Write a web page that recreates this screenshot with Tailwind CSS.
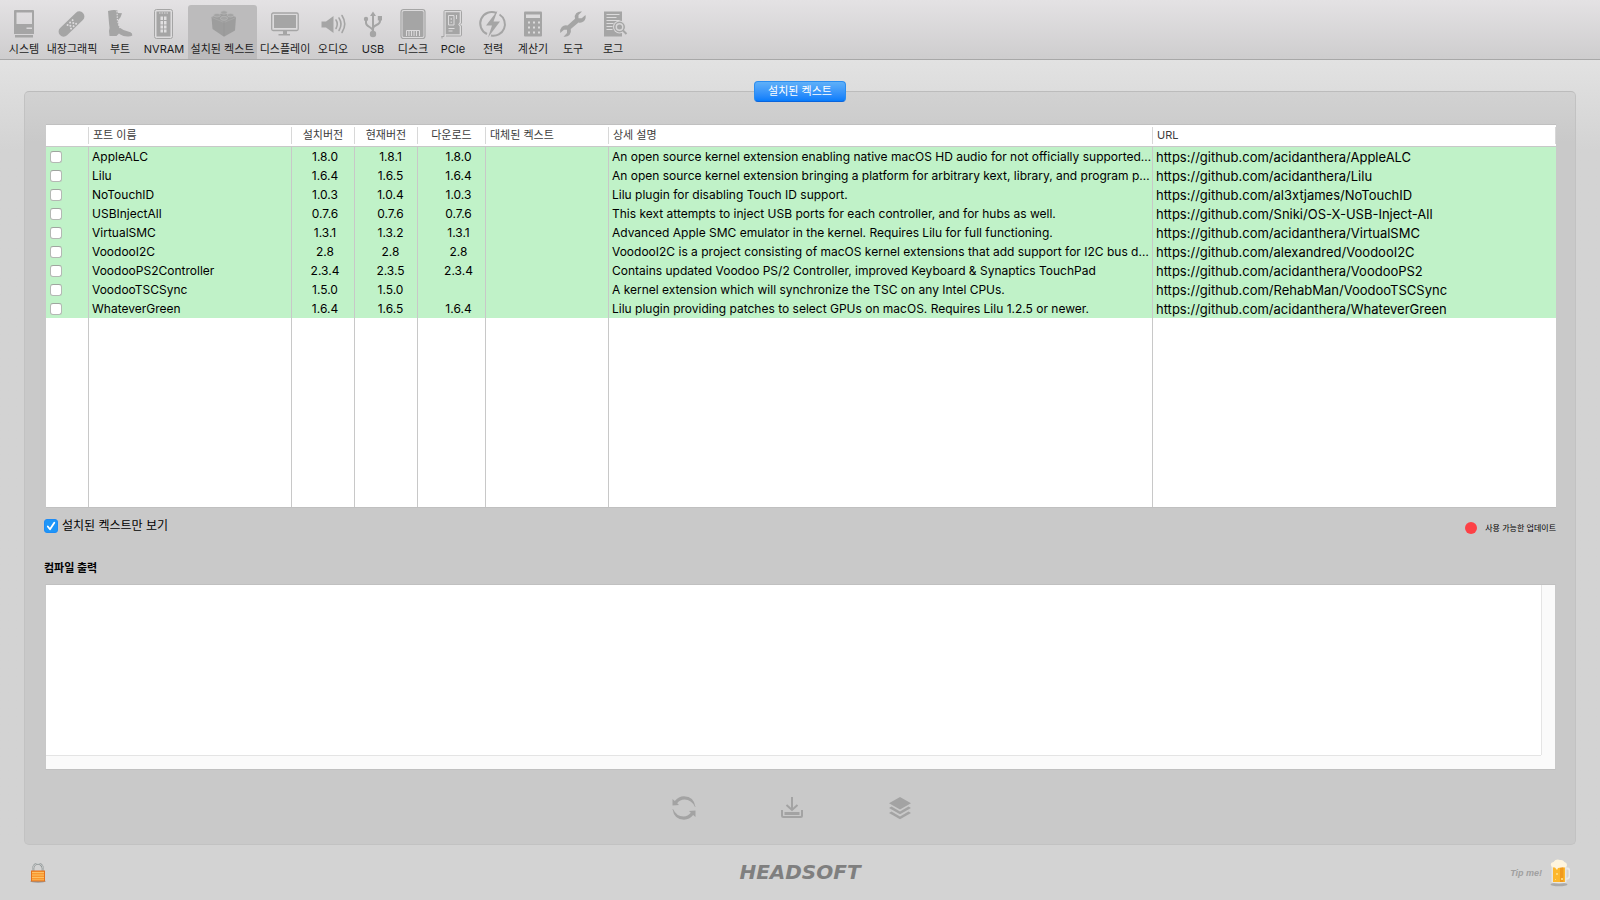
<!DOCTYPE html>
<html lang="ko">
<head>
<meta charset="utf-8">
<meta name="viewport" content="width=device-width, initial-scale=1">
<title>설치된 켁스트</title>
<script src="https://cdn.jsdelivr.net/npm/@tailwindcss/browser@4"></script>
</head>
<body class="flex min-h-screen flex-col bg-[#d3d3d3] font-[Inter,'Noto_Sans_CJK_KR',sans-serif] text-xs text-black">

<header class="flex h-[60px] shrink-0 items-end border-b border-[#a8a8a8] bg-linear-to-b from-[#e4e2e4] to-[#cecdce] pl-1 text-[11px] leading-[18px] whitespace-nowrap text-[#1c1c1c] [&_button]:flex [&_button]:h-[54px] [&_button]:shrink-0 [&_button]:flex-col [&_button]:items-center [&_button]:pt-[3px] [&_svg]:size-8 [&_svg]:shrink-0 [&_svg]:text-[#a5a5a5]">
  <button type="button" class="w-10"><svg viewBox="0 0 32 32" fill="currentColor"><path fill-rule="evenodd" d="M7 2h18q1 0 1 1v23H6V3q0-1 1-1zM8.500 4.500V16h15.500V4.500zM18.500 19.500v1.500h5.500v-1.500z"/><path d="M7 27h18v2.500H7z"/></svg>시스템</button>
  <button type="button" class="w-14"><svg viewBox="0 0 32 32"><g transform="rotate(-44 15.500 16)"><rect x="-.5" y="11" width="32" height="10" rx="5" fill="currentColor"/><g fill="#dddbdd"><circle cx="12" cy="14" r="1"/><circle cx="15.500" cy="14" r="1"/><circle cx="19" cy="14" r="1"/><circle cx="13.500" cy="16.500" r="1"/><circle cx="17.500" cy="16.500" r="1"/><circle cx="12" cy="19" r="1"/><circle cx="15.500" cy="19" r="1"/><circle cx="19" cy="19" r="1"/></g></g></svg>내장그래픽</button>
  <button type="button" class="w-10"><svg viewBox="0 0 32 32" fill="currentColor"><path d="M4 3q6-1.500 9.500-.5L14 5l4 .2-1.500 4-2.500 3 .5 5q1 3 5 4.800l7 2.300q2 1 1.800 3.200-1.500 1-4 1-5 .2-8-2L15 25.500 12.500 28H5.500L5 23q1-3 0-8z"/><path d="M13 3l.5 10 2.500 7" fill="none" stroke="#dddbdd" stroke-width="1.200" stroke-dasharray="1.500 1.200"/></svg>부트</button>
  <button type="button" class="w-12"><svg viewBox="0 0 32 32"><rect x="6.500" y="1.500" width="18" height="29" rx="2" fill="#dddcdd" stroke="currentColor"/><path d="M8.500 3.500h14v25h-14z" fill="currentColor"/><path d="M11 5h9" stroke="#dddcdd" stroke-dasharray="1.500 1"/><path d="M12 8h7v17h-7zM15.500 8v17M12 12.500h7M12 17h7M12 21h7" fill="#e0dfe0" stroke="#a5a5a5"/></svg>NVRAM</button>
  <button type="button" aria-current="page" class="w-[69px] rounded-t-[3px] bg-[#bcbbbc]"><svg viewBox="0 0 32 32"><path d="M4.500 9 16 5l13 4-1 13.500-11 6.200L5.500 21z" fill="#9d9d9d"/><path d="M5 9.500l12 5 12-5" fill="none" stroke="#a8a8a8"/><path d="M17 14v14" stroke="#979797"/><g fill="#a4a4a4" stroke="#b9b9b9" stroke-width=".7"><ellipse cx="17" cy="4.500" rx="3.200" ry="1.700"/><ellipse cx="10" cy="7.200" rx="3.300" ry="1.800"/><ellipse cx="23.500" cy="7.200" rx="3.300" ry="1.800"/><ellipse cx="17" cy="10.300" rx="3.600" ry="2"/></g></svg>설치된 켁스트</button>
  <button type="button" class="w-14"><svg viewBox="0 0 32 32"><rect x="2.700" y="5" width="26.500" height="17.500" rx="1.500" fill="#dcdbdc" stroke="currentColor" stroke-width="1.300"/><path d="M5 7h22v13H5zM14 23h4v3h3v1.500H9.500V26H14z" fill="currentColor"/></svg>디스플레이</button>
  <button type="button" class="w-10"><svg viewBox="0 0 32 32"><path d="M4.500 13.500H9l7.500-5.500v17L9 19.500H4.500z" fill="currentColor"/><path d="M19 12q2.500 4 0 8.500M22 10q4 6 0 12.500M25 7.500q5.500 8.500 0 17" fill="none" stroke="currentColor" stroke-width="1.600" stroke-linecap="round"/></svg>오디오</button>
  <button type="button" class="w-10"><svg viewBox="0 0 32 32"><path d="M16 6v20M16 23q0-2-3.500-4Q9 17 9 15v-3.500M16 20.500q0-2 3.500-3.500 3.500-1.500 3.500-4V10" fill="none" stroke="currentColor" stroke-width="2"/><path d="M16 3.500 19 8h-6zM20.800 8H25v4.500h-4.200z" fill="currentColor"/><circle cx="9" cy="11" r="2.200" fill="currentColor"/><circle cx="16" cy="26" r="3.200" fill="currentColor"/></svg>USB</button>
  <button type="button" class="w-10"><svg viewBox="0 0 32 32"><rect x="4" y="1.500" width="24" height="29" rx="2.500" fill="#dcdbdc" stroke="currentColor" stroke-width="1.200"/><rect x="5.500" y="3" width="21" height="26" rx="1.500" fill="currentColor"/><path d="M9.500 28v-5.500h13V28M12 23v5M14.500 23v5M17 23v5M19.500 23v5" fill="none" stroke="#dcdbdc"/></svg>디스크</button>
  <button type="button" class="w-10"><svg viewBox="0 0 32 32"><path d="M4.500 28.500H7V3.500q0-1 1-1h15.500q1 0 1 1V15l-1.500 1.500 1.500 1.500v9q0 1-1 1H9" fill="#dcdbdc" stroke="currentColor" stroke-width="1"/><path d="M5 28v2.500" stroke="currentColor"/><path d="M8.700 4.300h14v10l-1.500 2.200 1.500 2V26.300h-14z" fill="currentColor"/><path d="M11.500 7.500h5.500V17h-5.500zM19.500 7v4M11.500 20.500h6M11.500 23h4" fill="none" stroke="#dcdbdc"/><path d="M14.200 10v2M14.200 13.500v1.500" stroke="#dcdbdc"/></svg>PCIe</button>
  <button type="button" class="w-10"><svg viewBox="0 0 32 32"><path d="M19.500 5A11.500 11.500 0 1 0 10 26M14 27.500A11.500 11.500 0 0 0 22.500 6.500" fill="none" stroke="currentColor" stroke-width="2"/><path d="M20.500 2.500 9 17.500h6l-4 12 12-16h-6.500z" fill="currentColor"/></svg>전력</button>
  <button type="button" class="w-10"><svg viewBox="0 0 32 32"><rect x="7" y="3.500" width="18" height="25" rx="1" fill="currentColor"/><path d="M9 6.500h14V10H9z" fill="#dcdbdc"/><path d="M11 14.500h12M11 19.500h12M11 24.500h12" stroke="#dcdbdc" stroke-width="1.800" stroke-dasharray="2 3"/></svg>계산기</button>
  <button type="button" class="w-10"><svg viewBox="0 0 32 32"><path d="M25 3.500 21.500 7v3.200h3.200L28.500 7q.8 4-1.700 6.200-2.300 2-5.300 1.200L13.800 21q.8 3.500-1.300 6-2.200 2.300-6 1.700L10 25v-3.200H7L3.300 25q-.7-3.800 1.500-6 2.400-2.300 5.700-1.400L18 10.700q-1-3 1.200-5.400Q21.500 3 25 3.500z" fill="currentColor"/></svg>도구</button>
  <button type="button" class="w-10"><svg viewBox="0 0 32 32"><path d="M7 3.500h18V28.500H7z" fill="currentColor"/><path d="M9.500 6.500h13M9.500 9.500h10M9.500 12.500h13M9.500 15.500h7M9.500 18.500h6M9.500 21.500h6" stroke="#dcdbdc"/><circle cx="22.500" cy="19" r="6.500" fill="#d8d7d8"/><circle cx="22.500" cy="19" r="4.700" fill="#d8d7d8" stroke="currentColor" stroke-width="1.500"/><circle cx="22.500" cy="19" r="2.500" fill="currentColor"/><path d="M26 22.500l3.500 3.500" stroke="currentColor" stroke-width="2"/></svg>로그</button>
</header>

<div class="flex flex-1 flex-col bg-linear-to-b from-[#e2e2e2] to-[#d3d3d3] to-[90px] px-6 pt-[31px]">
  <main class="relative flex flex-1 flex-col rounded-[5px] border border-[#c2c2c2] border-t-[#bcbcbc] bg-linear-to-b from-[#d2d2d2] to-[#c9c9c9] to-[50px] px-[19px] pt-8">
    <button type="button" class="absolute -top-[11px] left-1/2 h-[21px] w-[92px] -translate-x-1/2 rounded-[4px] border border-[#2a8df0] border-b-[#0a64dc] bg-linear-to-b from-[#5fb0f8] to-[#057cfb] pb-0.5 text-[11px] leading-4 text-white">설치된 켁스트</button>

    <div class="ml-0.5 grid flex-1 border-y border-[#c0c0c0] bg-white">
      <table class="w-full table-fixed border-separate border-spacing-0 text-left [&_a]:block [&_a]:pt-px [&_a]:text-[13px] [&_a]:leading-[18px] [&_td]:whitespace-nowrap [&_td]:border-r [&_td]:border-[#c8c8c8] [&_td]:py-0 [&_td]:pl-[3px] [&_td:last-child]:border-r-0 [&_td:nth-child(3)]:pl-[4px] [&_td:nth-child(3)]:text-center [&_td:nth-child(4)]:pl-[9px] [&_td:nth-child(4)]:text-center [&_td:nth-child(5)]:pl-[14px] [&_td:nth-child(5)]:text-center [&_th]:border-b [&_th]:border-[#c8c8c8] [&_th]:p-0 [&_th]:text-[11px] [&_th]:font-normal [&_th]:text-[#3c3c3c] [&_th>span]:block [&_th>span]:h-[17px] [&_th>span]:border-r [&_th>span]:border-[#d8d8d8] [&_th>span]:px-1 [&_th>span]:leading-[17px] [&_input]:block [&_input]:size-3 [&_input]:appearance-none [&_input]:rounded-[3px] [&_input]:border [&_input]:border-[#b4b8b4] [&_input]:border-t-[#9fa59f] [&_input]:bg-white [&_input]:ml-px">
        <colgroup><col class="w-[43px]"><col class="w-[203px]"><col class="w-[63px]"><col class="w-[63px]"><col class="w-[68px]"><col class="w-[123px]"><col><col class="w-[403px]"></colgroup>
        <thead>
          <tr class="h-[22px]"><th scope="col"><span></span></th><th scope="col"><span>포트 이름</span></th><th scope="col" class="text-center"><span>설치버전</span></th><th scope="col" class="text-center"><span>현재버전</span></th><th scope="col" class="text-center"><span>다운로드</span></th><th scope="col"><span>대체된 켁스트</span></th><th scope="col"><span>상세 설명</span></th><th scope="col"><span>URL</span></th></tr>
        </thead>
        <tbody class="[&_tr]:h-[19px] [&_tr]:bg-[#c0f2c8]">
          <tr><td><input type="checkbox" aria-label="AppleALC"></td><td>AppleALC</td><td>1.8.0</td><td>1.8.1</td><td>1.8.0</td><td></td><td>An open source kernel extension enabling native macOS HD audio for not officially supported…</td><td><a href="https://github.com/acidanthera/AppleALC">https://github.com/acidanthera/AppleALC</a></td></tr>
          <tr><td><input type="checkbox" aria-label="Lilu"></td><td>Lilu</td><td>1.6.4</td><td>1.6.5</td><td>1.6.4</td><td></td><td>An open source kernel extension bringing a platform for arbitrary kext, library, and program p…</td><td><a href="https://github.com/acidanthera/Lilu">https://github.com/acidanthera/Lilu</a></td></tr>
          <tr><td><input type="checkbox" aria-label="NoTouchID"></td><td>NoTouchID</td><td>1.0.3</td><td>1.0.4</td><td>1.0.3</td><td></td><td>Lilu plugin for disabling Touch ID support.</td><td><a href="https://github.com/al3xtjames/NoTouchID">https://github.com/al3xtjames/NoTouchID</a></td></tr>
          <tr><td><input type="checkbox" aria-label="USBInjectAll"></td><td>USBInjectAll</td><td>0.7.6</td><td>0.7.6</td><td>0.7.6</td><td></td><td>This kext attempts to inject USB ports for each controller, and for hubs as well.</td><td><a href="https://github.com/Sniki/OS-X-USB-Inject-All">https://github.com/Sniki/OS-X-USB-Inject-All</a></td></tr>
          <tr><td><input type="checkbox" aria-label="VirtualSMC"></td><td>VirtualSMC</td><td>1.3.1</td><td>1.3.2</td><td>1.3.1</td><td></td><td>Advanced Apple SMC emulator in the kernel. Requires Lilu for full functioning.</td><td><a href="https://github.com/acidanthera/VirtualSMC">https://github.com/acidanthera/VirtualSMC</a></td></tr>
          <tr><td><input type="checkbox" aria-label="VoodooI2C"></td><td>VoodooI2C</td><td>2.8</td><td>2.8</td><td>2.8</td><td></td><td>VoodooI2C is a project consisting of macOS kernel extensions that add support for I2C bus d…</td><td><a href="https://github.com/alexandred/VoodooI2C">https://github.com/alexandred/VoodooI2C</a></td></tr>
          <tr><td><input type="checkbox" aria-label="VoodooPS2Controller"></td><td>VoodooPS2Controller</td><td>2.3.4</td><td>2.3.5</td><td>2.3.4</td><td></td><td>Contains updated Voodoo PS/2 Controller, improved Keyboard &amp; Synaptics TouchPad</td><td><a href="https://github.com/acidanthera/VoodooPS2">https://github.com/acidanthera/VoodooPS2</a></td></tr>
          <tr><td><input type="checkbox" aria-label="VoodooTSCSync"></td><td>VoodooTSCSync</td><td>1.5.0</td><td>1.5.0</td><td></td><td></td><td>A kernel extension which will synchronize the TSC on any Intel CPUs.</td><td><a href="https://github.com/RehabMan/VoodooTSCSync">https://github.com/RehabMan/VoodooTSCSync</a></td></tr>
          <tr><td><input type="checkbox" aria-label="WhateverGreen"></td><td>WhateverGreen</td><td>1.6.4</td><td>1.6.5</td><td>1.6.4</td><td></td><td>Lilu plugin providing patches to select GPUs on macOS. Requires Lilu 1.2.5 or newer.</td><td><a href="https://github.com/acidanthera/WhateverGreen">https://github.com/acidanthera/WhateverGreen</a></td></tr>
          <tr aria-hidden="true" class="h-full! bg-white!"><td></td><td></td><td></td><td></td><td></td><td></td><td></td><td></td></tr>
        </tbody>
      </table>
    </div>

    <div class="flex h-10 items-center justify-between pb-1">
      <label class="flex items-center gap-1"><span class="grid size-[14px]"><input type="checkbox" checked class="col-start-1 row-start-1 size-[14px] appearance-none rounded-[3px] border border-[#1d8bf5] bg-[#1e96f8]"><svg viewBox="0 0 14 14" class="pointer-events-none col-start-1 row-start-1" fill="none" stroke="#fff" stroke-width="1.800" stroke-linecap="round" stroke-linejoin="round"><path d="M3.800 7.500 6 10.300l4.300-6.600"/></svg></span>설치된 켁스트만 보기</label>
      <p class="flex items-center gap-2 pt-1 text-[8px]"><span class="size-3 rounded-full bg-[#fd4146]"></span>사용 가능한 업데이트</p>
    </div>

    <label for="output" class="mt-2.5 mb-1.5 h-5 text-[11px] leading-5 font-bold">컴파일 출력</label>
    <div class="ml-px grid h-[186px] grid-cols-[1fr_14px] grid-rows-[1fr_14px] border border-[#c0c0c0] border-x-[#c8c8c8] bg-[#fafafa]">
      <textarea id="output" class="resize-none bg-white outline-none"></textarea>
      <div class="border-l border-[#e4e4e4]"></div>
      <div class="border-t border-[#e4e4e4]"></div>
    </div>

    <div class="flex h-[74px] items-center justify-center gap-[84px] pt-0.5 pr-4 text-[#a3a3a3] [&_svg]:size-6">
      <button type="button" aria-label="새로 고침"><svg viewBox="0 0 24 24" fill="currentColor"><path d="M.5 3v6.500L7 9 5.200 7.200Q8 3.500 12.500 3.500q7 0 10.500 7.500h.5Q22 .5 12 .3 6.500.5 2.800 5z"/><path d="M23.500 21v-6.500l-6.500.5 1.800 1.800Q16 20.500 11.500 20.500q-7 0-10.500-7.500H.5Q2 23.500 12 23.700q5.500-.2 9.200-4.700z"/></svg></button>
      <button type="button" aria-label="다운로드"><svg viewBox="0 0 24 24" fill="none" stroke="currentColor" stroke-width="2"><path d="M12 1v13M6.500 9l5.500 5 5.500-5"/><path d="M2 14v5.500q0 1.500 1.500 1.500h17q1.500 0 1.500-1.500V14"/><path d="M4.500 17.500h15" stroke-width="3"/></svg></button>
      <button type="button" aria-label="설치"><svg viewBox="0 0 24 24" fill="currentColor"><path d="M12 1l11 6.300L12 13.500 1 7.300z"/><path d="M1 12l2.500-1.500L12 15.500l8.500-5L23 12l-11 6.300zM1 17l2.500-1.500L12 20.500l8.500-5L23 17l-11 6.300z"/></svg></button>
    </div>
  </main>
</div>

<footer class="grid h-[55px] shrink-0 grid-cols-3 items-center px-[30px]">
  <button type="button" aria-label="잠금" class="justify-self-start"><svg viewBox="0 0 16 20" class="h-5 w-4"><ellipse cx="8" cy="18.300" rx="7.800" ry="1.500" fill="#999"/><path d="M3.200 9V5.500a4.800 4.800 0 0 1 9.600 0V9" fill="none" stroke="#8f9494" stroke-width="2.200"/><path d="M3 9V5.500a5 5 0 0 1 10 0V9" fill="none" stroke="#dfe3e3" stroke-width=".8"/><rect x="1" y="8" width="14" height="10" fill="#f9982e"/><path d="M1 9.500h14M1 12h14M1 14.500h14M1 17h14" stroke="#fdc064"/><path d="M1 8h14M1.500 8v10M14.500 8v10M1 18h14" stroke="#e2711d"/></svg></button>
  <p class="justify-self-center pb-0.5 font-['DejaVu_Sans'] text-[20px] leading-5 font-bold text-[#7f7f7f] italic">HEADSOFT</p>
  <a href="#tip" class="flex items-center gap-2 justify-self-end font-['Liberation_Sans'] text-[9px] font-bold text-[#a0a0a0] italic">Tip me!<svg viewBox="0 0 20 28" class="h-7 w-5"><ellipse cx="9" cy="25.500" rx="8.500" ry="1.800" fill="#aaa"/><path d="M16 9.500h1.500q2 0 2 2.500v5q0 2.500-3.500 3" fill="none" stroke="#e9e9e9" stroke-width="1.800"/><path d="M1.500 7h15v16.500q-7.500 2-15 0z" fill="#e8e6e2"/><path d="M3 8h12v15H3z" fill="#fdb72d"/><path d="M10 8h3.500v15H10z" fill="#f09a1e"/><path d="M6 14h2v2H6zM11 19h2v2h-2zM5 20h1v1H5z" fill="#ffd674"/><path d="M1 6.500Q0 3.500 3.500 3 6-.5 10 1q3-.5 4.500 2 3 .5 2.300 4-.8 2-3.800 1.300L8 9l-1 2-2-2.500Q1.500 9 1 6.500z" fill="#fff5de"/></svg></a>
</footer>
</body>
</html>
